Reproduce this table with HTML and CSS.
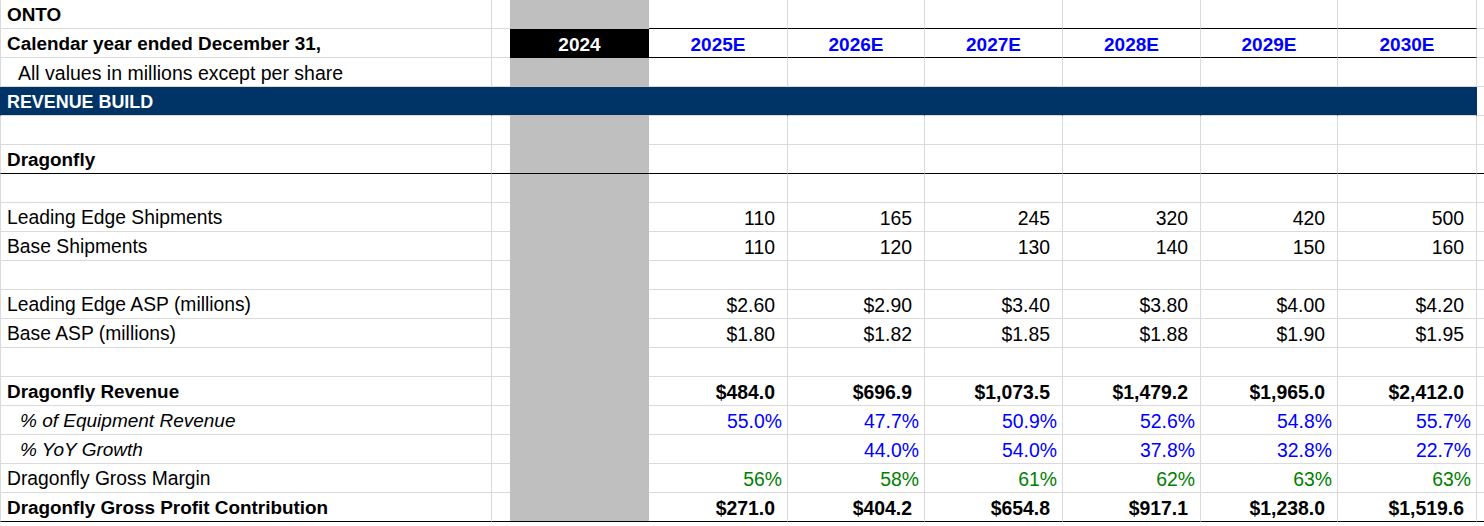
FILE: index.html
```html
<!DOCTYPE html>
<html>
<head>
<meta charset="utf-8">
<title>ONTO Revenue Build</title>
<link rel="stylesheet" href="styles.css">
</head>
<body>
<div class="sheet">
  <div class="row top">
    <div class="c lab b">ONTO</div><div class="c sp"></div><div class="c hist"></div>
    <div class="c d"></div><div class="c d"></div><div class="c d"></div><div class="c d"></div><div class="c d"></div><div class="c d"></div>
    <div class="c tail"></div>
  </div>
  <div class="row hdr">
    <div class="c lab b">Calendar year ended December 31,</div><div class="c sp"></div><div class="c hist">2024</div>
    <div class="c d yr">2025E</div><div class="c d yr">2026E</div><div class="c d yr">2027E</div><div class="c d yr">2028E</div><div class="c d yr">2029E</div><div class="c d yr">2030E</div>
    <div class="c tail"></div>
  </div>
  <div class="row">
    <div class="c lab i1">All values in millions except per share</div><div class="c sp"></div><div class="c hist"></div>
    <div class="c"></div><div class="c"></div><div class="c"></div><div class="c"></div><div class="c"></div><div class="c"></div>
    <div class="c tail"></div>
  </div>
  <div class="row sect">
    <div class="c lab b">REVENUE BUILD</div><div class="c sp"></div><div class="c hist"></div>
    <div class="c"></div><div class="c"></div><div class="c"></div><div class="c"></div><div class="c"></div><div class="c"></div>
    <div class="c tail"></div>
  </div>
  <div class="row">
    <div class="c lab"></div><div class="c sp"></div><div class="c hist"></div>
    <div class="c"></div><div class="c"></div><div class="c"></div><div class="c"></div><div class="c"></div><div class="c"></div>
    <div class="c tail"></div>
  </div>
  <div class="row rule">
    <div class="c lab b">Dragonfly</div><div class="c sp"></div><div class="c hist"></div>
    <div class="c"></div><div class="c"></div><div class="c"></div><div class="c"></div><div class="c"></div><div class="c"></div>
    <div class="c tail"></div>
  </div>
  <div class="row">
    <div class="c lab"></div><div class="c sp"></div><div class="c hist"></div>
    <div class="c"></div><div class="c"></div><div class="c"></div><div class="c"></div><div class="c"></div><div class="c"></div>
    <div class="c tail"></div>
  </div>
  <div class="row">
    <div class="c lab">Leading Edge Shipments</div><div class="c sp"></div><div class="c hist"></div>
    <div class="c">110</div><div class="c">165</div><div class="c">245</div><div class="c">320</div><div class="c">420</div><div class="c">500</div>
    <div class="c tail"></div>
  </div>
  <div class="row">
    <div class="c lab">Base Shipments</div><div class="c sp"></div><div class="c hist"></div>
    <div class="c">110</div><div class="c">120</div><div class="c">130</div><div class="c">140</div><div class="c">150</div><div class="c">160</div>
    <div class="c tail"></div>
  </div>
  <div class="row">
    <div class="c lab"></div><div class="c sp"></div><div class="c hist"></div>
    <div class="c"></div><div class="c"></div><div class="c"></div><div class="c"></div><div class="c"></div><div class="c"></div>
    <div class="c tail"></div>
  </div>
  <div class="row">
    <div class="c lab">Leading Edge ASP (millions)</div><div class="c sp"></div><div class="c hist"></div>
    <div class="c">$2.60</div><div class="c">$2.90</div><div class="c">$3.40</div><div class="c">$3.80</div><div class="c">$4.00</div><div class="c">$4.20</div>
    <div class="c tail"></div>
  </div>
  <div class="row">
    <div class="c lab">Base ASP (millions)</div><div class="c sp"></div><div class="c hist"></div>
    <div class="c">$1.80</div><div class="c">$1.82</div><div class="c">$1.85</div><div class="c">$1.88</div><div class="c">$1.90</div><div class="c">$1.95</div>
    <div class="c tail"></div>
  </div>
  <div class="row">
    <div class="c lab"></div><div class="c sp"></div><div class="c hist"></div>
    <div class="c"></div><div class="c"></div><div class="c"></div><div class="c"></div><div class="c"></div><div class="c"></div>
    <div class="c tail"></div>
  </div>
  <div class="row">
    <div class="c lab b">Dragonfly Revenue</div><div class="c sp"></div><div class="c hist"></div>
    <div class="c b">$484.0</div><div class="c b">$696.9</div><div class="c b">$1,073.5</div><div class="c b">$1,479.2</div><div class="c b">$1,965.0</div><div class="c b">$2,412.0</div>
    <div class="c tail"></div>
  </div>
  <div class="row">
    <div class="c lab i2">% of Equipment Revenue</div><div class="c sp"></div><div class="c hist"></div>
    <div class="c pct">55.0%</div><div class="c pct">47.7%</div><div class="c pct">50.9%</div><div class="c pct">52.6%</div><div class="c pct">54.8%</div><div class="c pct">55.7%</div>
    <div class="c tail"></div>
  </div>
  <div class="row">
    <div class="c lab i2">% YoY Growth</div><div class="c sp"></div><div class="c hist"></div>
    <div class="c pct"></div><div class="c pct">44.0%</div><div class="c pct">54.0%</div><div class="c pct">37.8%</div><div class="c pct">32.8%</div><div class="c pct">22.7%</div>
    <div class="c tail"></div>
  </div>
  <div class="row">
    <div class="c lab">Dragonfly Gross Margin</div><div class="c sp"></div><div class="c hist"></div>
    <div class="c grn">56%</div><div class="c grn">58%</div><div class="c grn">61%</div><div class="c grn">62%</div><div class="c grn">63%</div><div class="c grn">63%</div>
    <div class="c tail"></div>
  </div>
  <div class="row rule">
    <div class="c lab b">Dragonfly Gross Profit Contribution</div><div class="c sp"></div><div class="c hist"></div>
    <div class="c b">$271.0</div><div class="c b">$404.2</div><div class="c b">$654.8</div><div class="c b">$917.1</div><div class="c b">$1,238.0</div><div class="c b">$1,519.6</div>
    <div class="c tail"></div>
  </div>
</div>
</body>
</html>
```

FILE: styles.css
```css
* {
  box-sizing: border-box;
}

body {
  margin: 0;
  background: #ffffff;
}

.sheet {
  width: 1484px;
}

.row {
  display: grid;
  grid-template-columns: 492px 18px 139px 139px 137px 138px 138px 137px 139px 7px;
  height: 29px;
}

.c {
  display: flex;
  align-items: flex-end;
  justify-content: flex-end;
  padding: 0 12px 2px 0;
  border-right: 1px solid #dadada;
  border-bottom: 1px solid #dadada;
  font-family: "Liberation Sans", Arial, sans-serif;
  font-size: 19.4px;
  line-height: 22px;
  color: #000000;
  white-space: nowrap;
  overflow: hidden;
}

.lab {
  justify-content: flex-start;
  padding-left: 6px;
  padding-right: 0;
  border-left: 1px solid #dadada;
  font-size: 19.3px;
}

.lab.b {
  font-size: 18.9px;
}

.sect .lab.b {
  font-size: 17.9px;
}

.i1 {
  padding-left: 17px;
  font-size: 19.5px;
}

.i2 {
  padding-left: 19px;
  font-style: italic;
  font-size: 19px;
}

.b {
  font-weight: bold;
}

.sp {
  border-right: none;
  padding: 0;
}

.hist {
  background: #bfbfbf;
  border-right: none;
  border-bottom-color: #bfbfbf;
  padding: 0;
}

.tail {
  border-right: none;
  padding: 0;
}

.pct {
  padding-right: 5px;
  color: #0000ff;
}

.grn {
  padding-right: 5px;
  color: #008000;
}

.top .d,
.hdr .d {
  border-bottom-color: #000000;
}

.yr {
  justify-content: center;
  padding: 0 0 1px;
  color: #0000ff;
  font-weight: bold;
  font-size: 19px;
}

.hdr .hist {
  justify-content: center;
  padding-bottom: 1px;
  background: #000000;
  border-bottom-color: #000000;
  color: #ffffff;
  font-weight: bold;
  font-size: 19px;
}

.sect .c:not(.tail) {
  background: #003366;
  border-right-color: #003366;
  border-left-color: #003366;
  color: #ffffff;
}

.rule .c {
  border-bottom-color: #000000;
}
```
